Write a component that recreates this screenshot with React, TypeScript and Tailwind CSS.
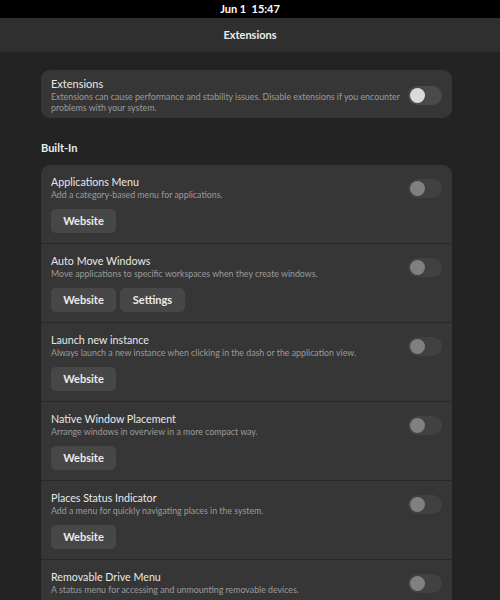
import React from 'react';

type Ext = {
  name: string;
  desc: string;
  settings?: boolean;
};

const EXTENSIONS: Ext[] = [
  { name: 'Applications Menu', desc: 'Add a category-based menu for applications.' },
  {
    name: 'Auto Move Windows',
    desc: 'Move applications to specific workspaces when they create windows.',
    settings: true,
  },
  {
    name: 'Launch new instance',
    desc: 'Always launch a new instance when clicking in the dash or the application view.',
  },
  { name: 'Native Window Placement', desc: 'Arrange windows in overview in a more compact way.' },
  { name: 'Places Status Indicator', desc: 'Add a menu for quickly navigating places in the system.' },
  { name: 'Removable Drive Menu', desc: 'A status menu for accessing and unmounting removable devices.' },
];

function Toggle({ dim }: { dim?: boolean }) {
  return (
    <div
      className={`w-[34px] h-[19px] rounded-full shrink-0 flex items-center px-[2px] ${
        dim ? 'bg-[#414141]' : 'bg-[#4a4a4a]'
      }`}
    >
      <div className={`w-[15px] h-[15px] rounded-full ${dim ? 'bg-[#808080]' : 'bg-[#dadada]'}`} />
    </div>
  );
}

function Pill({ label }: { label: string }) {
  return (
    <button className="h-[24px] w-[65px] rounded-[5px] bg-[#474747] text-[11px] font-bold text-[#ececec]">
      {label}
    </button>
  );
}

export default function App() {
  return (
    <div className="w-[500px] h-[600px] overflow-hidden bg-[#232323] font-['Lato',sans-serif] text-[#e8e8e8]">
      {/* top bar */}
      <div className="h-[18px] bg-black flex items-center justify-center text-[11px] font-bold text-white whitespace-pre">
        Jun 1  15:47
      </div>

      {/* header */}
      <div className="h-[34px] bg-[#2f2f2f] flex items-center justify-center text-[11px] font-bold text-[#ececec]">
        Extensions
      </div>

      <div className="pl-[41px] pr-[48px] pt-[18px]">
        {/* master switch */}
        <div className="rounded-[9px] bg-[#363636] pl-[10px] pr-[10px] pt-[7px] pb-[5px] flex items-center gap-[5px]">
          <div className="flex-1">
            <div className="text-[11px] leading-[14px]">Extensions</div>
            <div className="text-[8.8px] leading-[11px] text-[#9b9b9b]">
              Extensions can cause performance and stability issues. Disable extensions if you encounter problems
              with your system.
            </div>
          </div>
          <Toggle />
        </div>

        <div className="mt-[23px] mb-[10px] text-[11px] leading-[14px] font-bold text-[#ececec]">Built-In</div>

        <div className="rounded-[9px] bg-[#363636] divide-y divide-[#282828]">
          {EXTENSIONS.map((e) => (
            <div key={e.name} className="pl-[10px] pr-[10px] pt-[10px] pb-[10px]">
              <div className="flex items-center gap-[8px]">
                <div className="flex-1">
                  <div className="text-[10.7px] leading-[14px]">{e.name}</div>
                  <div className="text-[8.8px] leading-[12px] text-[#9b9b9b]">{e.desc}</div>
                </div>
                <Toggle dim />
              </div>
              <div className="mt-[8px] flex gap-[4px]">
                <Pill label="Website" />
                {e.settings && <Pill label="Settings" />}
              </div>
            </div>
          ))}
        </div>
      </div>
    </div>
  );
}
